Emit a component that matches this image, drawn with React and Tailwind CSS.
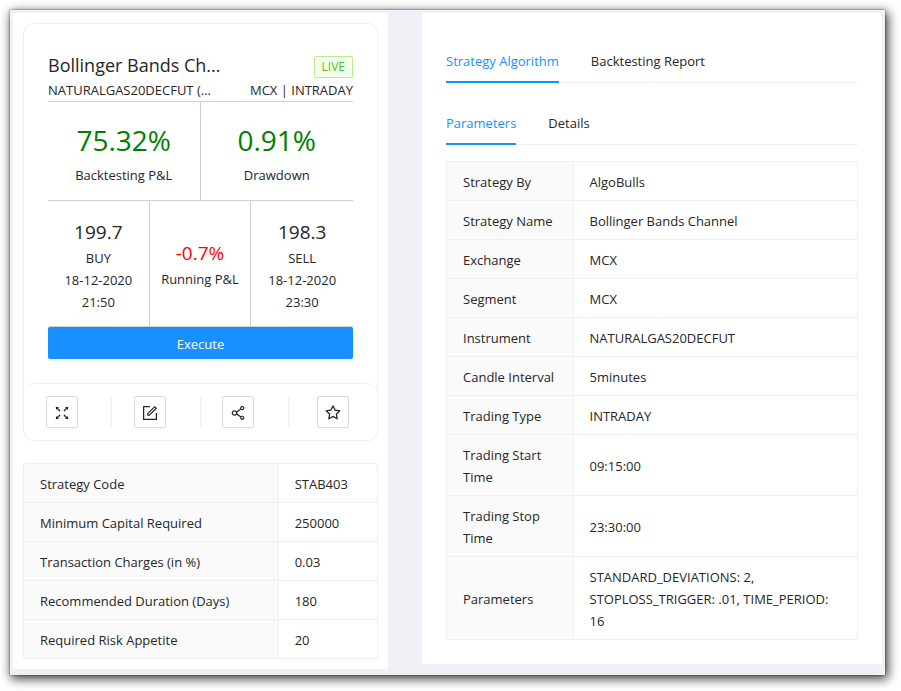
import { useState } from "react";
import {
  AiOutlineForm,
  AiOutlineFullscreen,
  AiOutlineShareAlt,
  AiOutlineStar,
} from "react-icons/ai";

const summary = [
  ["Strategy Code", "STAB403"],
  ["Minimum Capital Required", "250000"],
  ["Transaction Charges (in %)", "0.03"],
  ["Recommended Duration (Days)", "180"],
  ["Required Risk Appetite", "20"],
];

const parameters = [
  ["Strategy By", "AlgoBulls"],
  ["Strategy Name", "Bollinger Bands Channel"],
  ["Exchange", "MCX"],
  ["Segment", "MCX"],
  ["Instrument", "NATURALGAS20DECFUT"],
  ["Candle Interval", "5minutes"],
  ["Trading Type", "INTRADAY"],
  ["Trading Start Time", "09:15:00"],
  ["Trading Stop Time", "23:30:00"],
  ["Parameters", "STANDARD_DEVIATIONS: 2, STOPLOSS_TRIGGER: .01, TIME_PERIOD: 16"],
];

function Descriptions({ rows, headWidth }) {
  return (
    <div className="overflow-hidden rounded-xs border border-[#f0f0f0]">
      <table className="w-full table-fixed border-collapse text-left">
        <tbody>
          {rows.map(([label, value]) => (
            <tr key={label} className="border-b border-[#f0f0f0] last:border-b-0">
              <th
                scope="row"
                className={`${headWidth} border-r border-[#f0f0f0] bg-[#fafafa] pt-[9px] pr-3 pb-[7px] pl-4 font-normal`}
              >
                {label}
              </th>
              <td className="px-4 pt-[9px] pb-[7px]">{value}</td>
            </tr>
          ))}
        </tbody>
      </table>
    </div>
  );
}

function Tabs({ items }) {
  const [active, setActive] = useState(items[0]);
  return (
    <div role="tablist" className="mb-4 flex gap-8 shadow-[inset_0_-1px_0_#f0f0f0]">
      {items.map((item) => (
        <button
          key={item}
          type="button"
          role="tab"
          aria-selected={item === active}
          onClick={() => setActive(item)}
          className={`cursor-pointer border-b-2 pt-[13px] pb-[9px] ${
            item === active ? "border-[#1890ff] text-[#1890ff]" : "border-transparent"
          }`}
        >
          {item}
        </button>
      ))}
    </div>
  );
}

function Trade({ price, side, date, time }) {
  return (
    <div className="flex flex-col items-center pt-4 pb-[13px]">
      <span className="text-[19px] leading-[30px]">{price}</span>
      <span>{side}</span>
      <span>{date}</span>
      <span>{time}</span>
    </div>
  );
}

function Metric({ value, label }) {
  return (
    <div className="pt-4 pb-3.5">
      <p className="mb-0.5 text-[28px] leading-[44px] text-[#008000]">{value}</p>
      <p>{label}</p>
    </div>
  );
}

function Action({ label, icon: Icon, last }) {
  return (
    <li
      className={`flex h-8 justify-center ${last ? "" : "border-r border-[#f0f0f0] pr-3"}`}
    >
      <button
        type="button"
        aria-label={label}
        className="flex size-8 cursor-pointer items-center justify-center rounded-xs border border-[#d9d9d9] bg-white pt-px shadow-[0_2px_0_rgba(0,0,0,0.016)]"
      >
        <Icon size={18} />
      </button>
    </li>
  );
}

export default function App() {
  return (
    <div className="bg-white pt-2.5 pr-4 pb-4 pl-2.5 font-['Open_Sans','Noto_Sans',sans-serif] text-[13px] leading-[22px] text-[#262626]">
      <main className="grid grid-cols-[375fr_460fr] items-start gap-[34px] bg-[#f0f1f6] px-[3px] pt-[3px] pb-1.5 shadow-[0_0_2px_rgba(0,0,0,0.55),2px_3px_10px_1px_rgba(0,0,0,0.75)]">
        <section className="rounded-xs bg-white p-2.5">
          <article className="mb-[22px] rounded-[10px] border border-[#f0f0f0]">
            <div className="p-6">
              <header className="flex items-end justify-between border-b border-[#d0d0d0] pt-[3px]">
                <div>
                  <h1 className="text-lg leading-7">Bollinger Bands Ch...</h1>
                  <p>NATURALGAS20DECFUT (...</p>
                </div>
                <div className="flex flex-col items-end">
                  <span className="mb-px rounded-xs border border-[#b7eb8f] bg-[#f6ffed] px-[7px] text-xs leading-5 text-[#52c41a]">
                    LIVE
                  </span>
                  <p>MCX | INTRADAY</p>
                </div>
              </header>

              <div className="grid grid-cols-2 divide-x divide-[#d0d0d0] border-b border-[#d0d0d0] text-center">
                <Metric value="75.32%" label="Backtesting P&L" />
                <Metric value="0.91%" label="Drawdown" />
              </div>

              <div className="grid grid-cols-3 divide-x divide-[#d0d0d0] border-b border-[#d0d0d0]">
                <Trade price="199.7" side="BUY" date="18-12-2020" time="21:50" />
                <div className="flex flex-col items-center justify-center">
                  <span className="text-[19px] leading-[30px] text-[#ff0000]">-0.7%</span>
                  <span className="whitespace-nowrap">Running P&amp;L</span>
                </div>
                <Trade price="198.3" side="SELL" date="18-12-2020" time="23:30" />
              </div>

              <button
                type="button"
                className="h-8 w-full cursor-pointer rounded-xs bg-[#1890ff] pt-0.5 text-white shadow-[0_2px_0_rgba(0,0,0,0.045)]"
              >
                Execute
              </button>
            </div>

            <ul className="grid grid-cols-4 rounded-[10px] border-t border-[#f0f0f0] py-3">
              <Action label="Expand" icon={AiOutlineFullscreen} />
              <Action label="Edit" icon={AiOutlineForm} />
              <Action label="Share" icon={AiOutlineShareAlt} />
              <Action label="Favourite" icon={AiOutlineStar} last />
            </ul>
          </article>

          <Descriptions rows={summary} headWidth="w-[72%]" />
        </section>

        <section className="rounded-xs bg-white p-6">
          <Tabs items={["Strategy Algorithm", "Backtesting Report"]} />
          <Tabs items={["Parameters", "Details"]} />
          <Descriptions rows={parameters} headWidth="w-[126px]" />
        </section>
      </main>
    </div>
  );
}
